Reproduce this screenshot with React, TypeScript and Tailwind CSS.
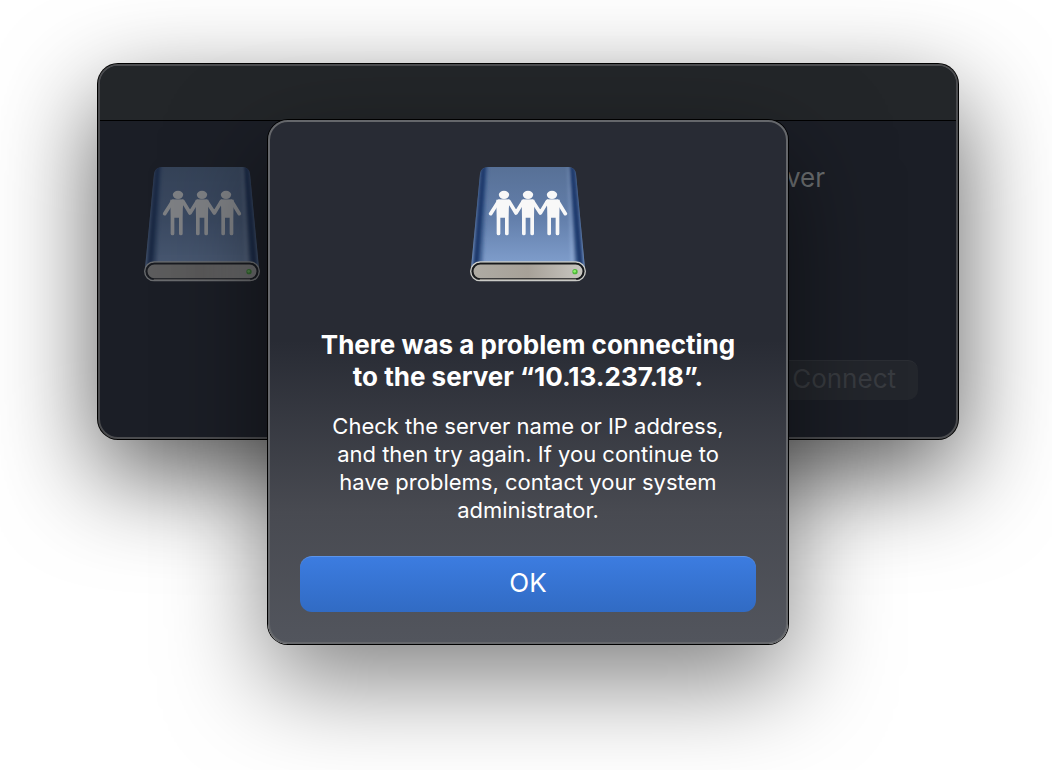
import { useId } from 'react'

function Person({ x, lean }: { x: number; lean: number }) {
  return (
    <g transform={`translate(${x} 0)`}>
      <ellipse cx="0" cy="119.500" rx="15.500" ry="12.500" />
      <g transform={`translate(${lean} 0)`}>
        <path d="M-19 134 H19 L18 188 V236 Q18 241 12.500 241 Q7 241 7 236 V188 H-7 V236 Q-7 241 -12.500 241 Q-18 241 -18 236 V188 Z" />
      </g>
    </g>
  )
}

function SharedDriveIcon({ className = '' }: { className?: string }) {
  const id = useId()
  return (
    <svg viewBox="45 33 348 348" className={`h-[116px] w-[116px] shrink-0 ${className}`} aria-hidden="true">
      <defs>
        <linearGradient id={`${id}top`} x1="0" y1="0" x2="0" y2="1">
          <stop offset="0" stopColor="#577096" />
          <stop offset="0.5" stopColor="#6480ac" />
          <stop offset="1" stopColor="#86a5d4" />
        </linearGradient>
        <filter id={`${id}soft`} x="-50%" y="-10%" width="200%" height="120%">
          <feGaussianBlur stdDeviation="4" />
        </filter>
        <linearGradient id={`${id}front`} x1="0" x2="1">
          <stop offset="0" stopColor="#aeaba3" />
          <stop offset="0.5" stopColor="#a7a198" />
          <stop offset="1" stopColor="#c9c7c1" />
        </linearGradient>
        <clipPath id={`${id}clip`}>
          <path d="M98 36 H342 Q360 38 363 56 L391 350 H47 L75 56 Q78 38 98 36 Z" />
        </clipPath>
      </defs>
      <g clipPath={`url(#${id}clip)`}>
        <path fill={`url(#${id}top)`} d="M45 33 H393 V360 H45 Z" />
        <g filter={`url(#${id}soft)`}>
          <path fill="#2f4f84" fillOpacity="0.6" d="M80 25 H99 L82 350 H50 Z" />
          <path fill="#1b376a" d="M79 25 H93 L70 350 H53 Z" />
          <path fill="#2f4f84" fillOpacity="0.6" d="M358 25 H341 L358 350 H388 Z" />
          <path fill="#1b376a" d="M359 25 H345 L369 350 H386 Z" />
          <path fill="#a9c4ec" fillOpacity="0.5" d="M338 30 L340 30 L358 350 L350 350 Z" />
        </g>
      </g>
      <g fill="#f8f8f8">
        <Person x={147} lean={-4} />
        <Person x={219} lean={0} />
        <Person x={291} lean={4} />
        <path
          fill="none"
          stroke="#f8f8f8"
          strokeWidth="11"
          strokeLinecap="round"
          strokeLinejoin="round"
          d="M131 139 L107 176 M162 139 L183 174 L205 139 M233 139 L256 174 L277 139 M308 139 L331 176"
        />
        <path d="M131 133.500 H162 L168 140 L160 158 H128 L122 144 Z M205 133.500 H233 L240 142 L234 158 H204 L198 142 Z M277 133.500 H308 L314 142 L311 158 H279 L270 142 Z" />
      </g>
      <rect x="47" y="321" width="344" height="56" rx="28" fill="#292c30" stroke="#c9cac6" strokeWidth="4" />
      <rect x="53" y="326" width="332" height="46" rx="23" fill={`url(#${id}front)`} stroke="#17191b" strokeWidth="5" />
      <path d="M74 373.500 H364" stroke="#8e8c86" strokeWidth="3" />
      <circle cx="360" cy="350" r="8" fill="#4fb83a" />
      <circle cx="359" cy="349" r="4" fill="#8cf56b" />
    </svg>
  )
}

export default function App() {
  return (
    <main className="min-h-screen overflow-hidden bg-white pt-16 pr-[94px] pb-[126px] pl-[98px] font-['Inter',sans-serif]">
      <div className="relative">
        <section
          aria-label="Connect to Server"
          className="flex min-h-[375px] flex-col overflow-hidden rounded-[20px] border-2 border-[#4b4c4f] bg-[#1b1e26] shadow-[0_0_0_1px_#000,0_36px_100px_rgba(0,0,0,0.65)]"
        >
          <header className="h-[55px] border-b border-black bg-[#232629]" />
          <div className="flex flex-1 items-stretch justify-between gap-8 pt-[45px] pr-[38px] pb-[37px] pl-11">
            <SharedDriveIcon className="opacity-45" />
            <div className="flex flex-1 flex-col items-end justify-between">
              <h2 className="mr-[93px] text-[26px] leading-6 text-[#6b6e70]">Connect to Server</h2>
              <button
                disabled
                className="h-10 rounded-[10px] border-t border-[#2b2e34] bg-[#23262c] px-[22px] pb-1 text-[26px] leading-8 text-[#383b40]"
              >
                Connect
              </button>
            </div>
          </div>
        </section>

        <div
          role="alertdialog"
          aria-labelledby="alert-title"
          aria-describedby="alert-message"
          className="absolute top-14 left-1/2 flex w-[520px] -translate-x-1/2 flex-col items-center rounded-[20px] border-2 border-[#65676b] bg-linear-to-b from-[#282b34] from-42% via-[#484a51] via-75% to-[#52555d] px-[30px] pt-11 pb-[30px] text-center text-white shadow-[0_0_0_1px_#000,0_36px_100px_rgba(0,0,0,0.5)]"
        >
          <SharedDriveIcon />
          <h1 id="alert-title" className="mt-[47px] text-[26px] leading-8 font-bold">
            There was a problem connecting
            <br />
            to the server “10.13.237.18”.
          </h1>
          <p id="alert-message" className="mt-[19px] text-[22px] leading-7">
            Check the server name or IP address,
            <br />
            and then try again. If you continue to
            <br />
            have problems, contact your system
            <br />
            administrator.
          </p>
          <button className="mt-8 h-14 w-full rounded-xl border-t border-[#5c94ea] bg-linear-to-b from-[#3c7ce0] to-[#316bc4] pb-1 text-[26px] leading-8">
            OK
          </button>
        </div>
      </div>
    </main>
  )
}
